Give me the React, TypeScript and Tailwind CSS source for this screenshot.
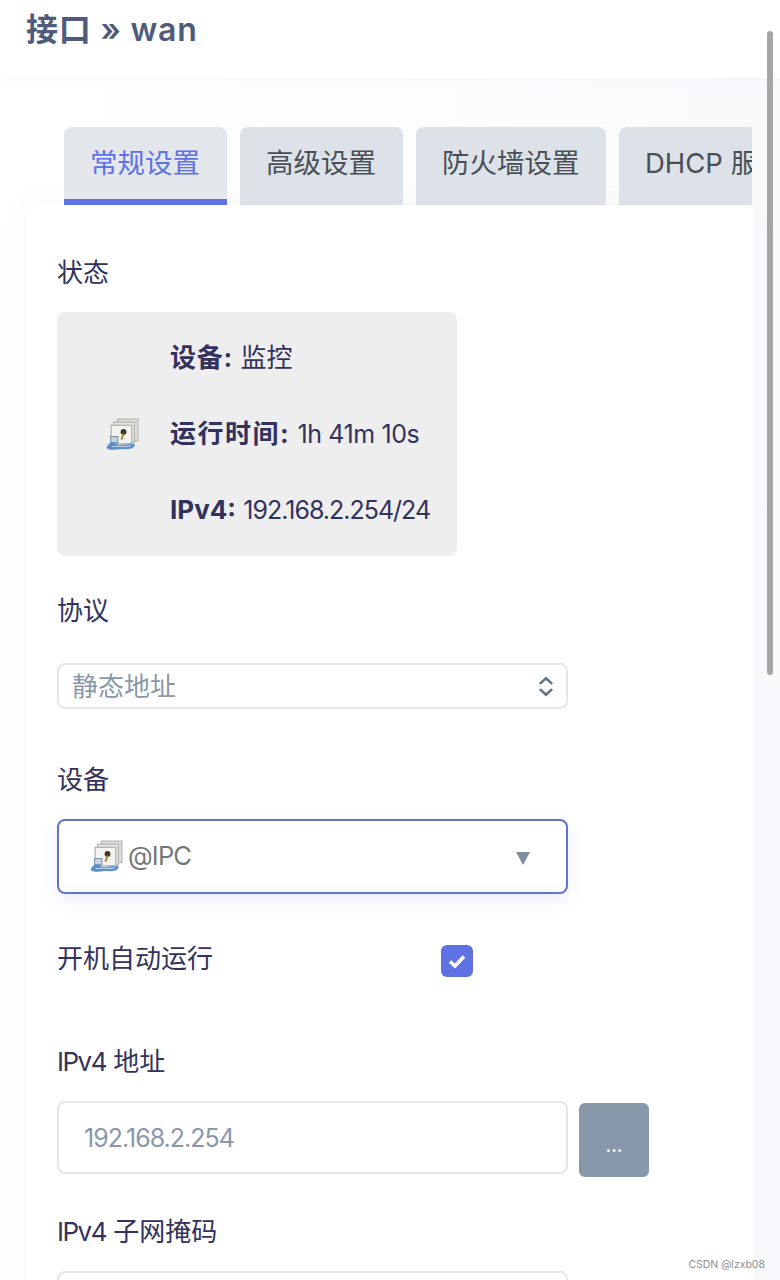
const fontStack = { fontFamily: '"Inter", "Noto Sans CJK SC", sans-serif' };

// 网口图标: stacked windows with a plug and a blue cable
const DeviceIcon = ({ className }: { className: string }) => (
    <svg viewBox="0 0 32 32" className={className}>
        <rect x="11" y="1" width="20" height="21" fill="#dcdcd9" stroke="#b2b3af" />
        <rect x="7.500" y="4" width="20" height="20" fill="#e8e8e5" stroke="#aaaba7" />
        <rect x="5" y="7" width="20" height="18" fill="#f3f3f0" stroke="#a3a49f" />
        <circle cx="17" cy="13.500" r="2.800" fill="#3d3420" />
        <path d="M17 15 L15 21" stroke="#a98b3c" strokeWidth="2" />
        <rect x="4.500" y="18" width="7" height="6" fill="#c9d3dc" stroke="#7f90a2" />
        <path d="M0.500 29 C2 24 7 22 10 25 C14 28 20 24 28 25.500 C28 29 24 31 16 30 C10 29.500 5 32.500 0.500 29 Z" fill="#5b8fc7" />
        <path d="M6 28 C11 26 16 29 24 27" stroke="#c5dcf2" strokeWidth="1" fill="none" />
    </svg>
);

const tabs = [
    { name: "常规设置", width: "w-[163px]", active: true },
    { name: "高级设置", width: "w-[163px]", active: false },
    { name: "防火墙设置", width: "w-[190px]", active: false },
    { name: "DHCP 服务器", width: "w-[190px]", active: false }
];

const App = () => {
    return (
        <div
            className="relative h-[1280px] w-[780px] overflow-hidden bg-white"
            style={fontStack}>
            <header className="relative z-10 h-[78px] bg-white pl-[26px] pt-[8px] shadow-[0_2px_10px_rgba(136,152,170,0.06)]">
                <h1 className="text-[32px] font-semibold leading-[44px] tracking-[0.8px] text-[#4f5b7a]">
                    接口 » wan
                </h1>
            </header>

            <main className="h-[1202px] bg-gradient-to-r from-white to-[#f9fafc] pl-[26px] pt-[49px]">
                <div className="ml-[38px] flex h-[78px] w-[688px] gap-[13px] overflow-hidden">
                    {tabs.map((tab) => (
                        <div
                            key={tab.name}
                            className={`${tab.width} flex h-[78px] shrink-0 items-start whitespace-nowrap rounded-t-lg pl-[26px] pt-[16px] text-[27.5px] leading-[40px] ${
                                tab.active
                                    ? "border-b-[6px] border-[#5e72e4] bg-[#e3e7ec] text-[#5e72e4]"
                                    : "bg-[#dce2e8] text-[#4a4f57]"
                            }`}>
                            {tab.name}
                        </div>
                    ))}
                </div>

                <section className="h-[1100px] w-[728px] rounded-lg bg-white pl-[31px] pt-[49px] text-[26px] text-[#32325d] shadow-[0_0_24px_rgba(136,152,170,0.08)]">
                    <p className="leading-[38px]">状态</p>

                    <div className="mt-[20px] flex h-[244px] w-[400px] items-center rounded-lg bg-[#eeeeee] pl-[49px]">
                        <DeviceIcon className="h-[33px] w-[33px] shrink-0" />
                        <div className="ml-[31px] flex flex-col gap-[38px] whitespace-nowrap leading-[38px]">
                            <p>
                                <b className="font-bold tracking-[0.8px]">设备:</b> 监控
                            </p>
                            <p>
                                <b className="font-bold tracking-[1.5px]">运行时间:</b>{" "}
                                <span className="text-[25px] tracking-[-0.4px]">1h 41m 10s</span>
                            </p>
                            <p>
                                <b className="font-bold">IPv4:</b>{" "}
                                <span className="text-[25px] tracking-[-1px]">192.168.2.254/24</span>
                            </p>
                        </div>
                    </div>

                    <p className="mt-[36px] leading-[38px]">协议</p>

                    <div className="mt-[33px] flex h-[46px] w-[511px] items-center justify-between rounded-lg border-2 border-[#e4e6ea] pl-[13px] pr-[11px] text-[26px] text-[#8898aa]">
                        静态地址
                        <svg viewBox="0 0 18 24" className="h-[21px] w-[18px]" fill="none" stroke="#66727f" strokeWidth="3">
                            <path d="M2 9 L9 2.500 L16 9" />
                            <path d="M2 15 L9 21.500 L16 15" />
                        </svg>
                    </div>

                    <p className="mt-[52px] leading-[38px]">设备</p>

                    <div className="mt-[20px] flex h-[75px] w-[511px] items-center rounded-lg border-2 border-[#6272cf] pl-[31px] pr-[36px] text-[#777777] shadow-[0_6px_16px_rgba(94,114,228,0.12)]">
                        <DeviceIcon className="h-[33px] w-[33px] shrink-0" />
                        <span className="ml-[5px] text-[25.5px] tracking-[-0.8px]">@IPC</span>
                        <svg viewBox="0 0 14 13" className="ml-auto mt-[3px] h-[13px] w-[14px]">
                            <path d="M0 0 H14 L7 13 Z" fill="#7d90a3" />
                        </svg>
                    </div>

                    <div className="mt-[46px] flex h-[38px] w-[416px] items-start justify-between">
                        <span className="leading-[38px]">开机自动运行</span>
                        <span className="mt-[5px] flex h-[32px] w-[32px] items-center justify-center rounded-md bg-[#5e72e4]">
                            <svg viewBox="0 0 20 20" className="h-[20px] w-[20px]" fill="none" stroke="#ffffff" strokeWidth="3.500">
                                <path d="M3 10.500 L8 15 L17 5.500" />
                            </svg>
                        </span>
                    </div>

                    <p className="mt-[65px] leading-[38px]">
                        <span className="tracking-[-1.5px]">IPv4</span> 地址
                    </p>

                    <div className="mt-[20px] flex items-start gap-[11px]">
                        <div className="flex h-[73px] w-[511px] items-center rounded-lg border-2 border-[#e4e6ea] pl-[25px] pt-[2px] text-[25px] tracking-[-1px] text-[#8898aa]">
                            192.168.2.254
                        </div>
                        <button className="mt-[2px] flex h-[74px] w-[70px] items-center justify-center rounded-md bg-[#8898aa] pt-[10px] text-[18px] font-semibold text-white">
                            ...
                        </button>
                    </div>

                    <p className="mt-[36px] leading-[38px]">
                        <span className="tracking-[-1.5px]">IPv4</span> 子网掩码
                    </p>

                    <div className="mt-[20px] h-[73px] w-[511px] rounded-lg border-2 border-[#e4e6ea]" />
                </section>
            </main>

            <div className="absolute left-[767px] top-[31px] z-20 h-[644px] w-[6px] rounded-full bg-[#a6a6a6]" />
            <span className="absolute right-[15px] top-[1258px] z-20 text-[10.5px] leading-[14px] text-[#8f8f8f]">
                CSDN @lzxb08
            </span>
        </div>
    );
};

export default App;
